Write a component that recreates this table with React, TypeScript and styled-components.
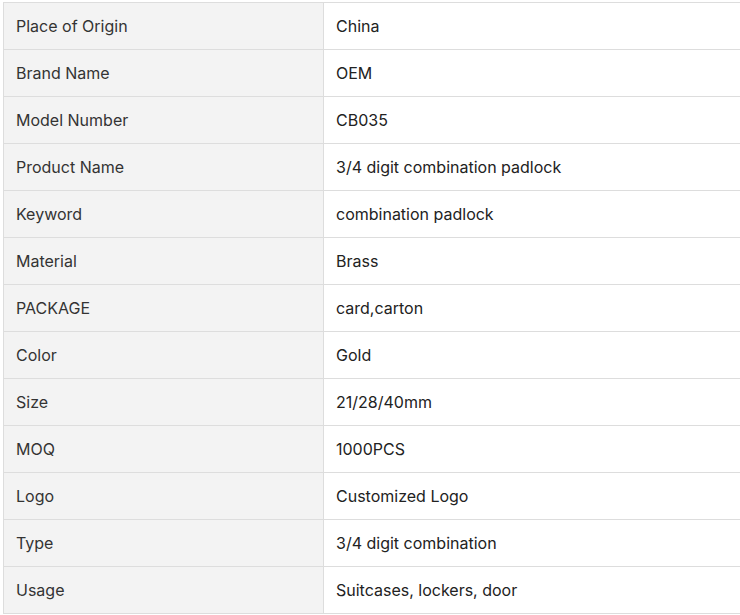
import React from "react";
import styled, { createGlobalStyle } from "styled-components";

const Global = createGlobalStyle`
  html, body { margin: 0; padding: 0; background: #fff; overflow: hidden; }
  body { font-family: Inter, "Open Sans", "Liberation Sans", sans-serif; }
`;

const Page = styled.div`
  padding: 2px 0 0 3px;
`;

const Table = styled.table`
  border-collapse: collapse;
  width: 740px;
  table-layout: fixed;
`;

const Row = styled.tr`
  height: 47px;
`;

const Cell = styled.td<{ $label?: boolean }>`
  border: 1px solid #dddddd;
  padding: 0 12px;
  height: 46px;
  box-sizing: border-box;
  vertical-align: middle;
  font-size: 16px;
  line-height: 20px;
  color: ${(p) => (p.$label ? "#333333" : "#222222")};
  background: ${(p) => (p.$label ? "#f3f3f3" : "#ffffff")};
`;

const rows: [string, string][] = [
  ["Place of Origin", "China"],
  ["Brand Name", "OEM"],
  ["Model Number", "CB035"],
  ["Product Name", "3/4 digit combination padlock"],
  ["Keyword", "combination padlock"],
  ["Material", "Brass"],
  ["PACKAGE", "card,carton"],
  ["Color", "Gold"],
  ["Size", "21/28/40mm"],
  ["MOQ", "1000PCS"],
  ["Logo", "Customized Logo"],
  ["Type", "3/4 digit combination"],
  ["Usage", "Suitcases, lockers, door"],
];

export default function App() {
  return (
    <>
      <Global />
      <Page>
        <Table>
          <colgroup>
            <col style={{ width: 320 }} />
            <col />
          </colgroup>
          <tbody>
            {rows.map(([k, v]) => (
              <Row key={k}>
                <Cell $label>{k}</Cell>
                <Cell>{v}</Cell>
              </Row>
            ))}
          </tbody>
        </Table>
      </Page>
    </>
  );
}
